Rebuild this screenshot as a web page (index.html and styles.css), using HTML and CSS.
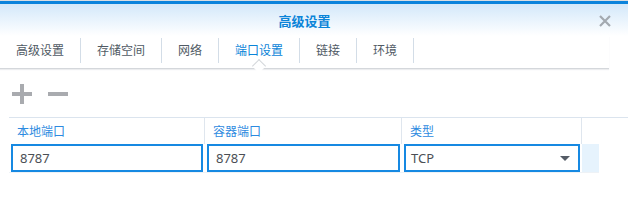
FILE: index.html
```html
<!DOCTYPE html>
<html lang="zh-CN">

<head>
    <meta charset="UTF-8">
    <title>高级设置</title>
    <link rel="stylesheet" href="styles.css">
</head>

<body>
    <div class="dialog">
        <div class="titlebar">
            <span class="title">高级设置</span>
            <span class="close" title="关闭">
                <svg width="12" height="12" viewBox="0 0 12 12">
                    <path d="M1 1 L11 11 M11 1 L1 11" stroke="#a3a9b0" stroke-width="2.2" />
                </svg>
            </span>
        </div>

        <div class="tabs">
            <div class="tab">高级设置</div>
            <div class="tab">存储空间</div>
            <div class="tab">网络</div>
            <div class="tab active">端口设置</div>
            <div class="tab">链接</div>
            <div class="tab">环境</div>
        </div>

        <div class="toolbar">
            <span class="tool-btn" title="新增">
                <svg width="20" height="20" viewBox="0 0 20 20">
                    <rect x="0" y="8" width="20" height="4" fill="#a9abaf" />
                    <rect x="8" y="0" width="4" height="20" fill="#a9abaf" />
                </svg>
            </span>
            <span class="tool-btn" title="删除">
                <svg width="20" height="20" viewBox="0 0 20 20">
                    <rect x="0" y="8" width="20" height="4" fill="#a9abaf" />
                </svg>
            </span>
        </div>

        <div class="grid">
            <div class="head">本地端口</div>
            <div class="head">容器端口</div>
            <div class="head">类型</div>
            <div class="head last"></div>

            <div class="cell"><input class="field" type="text" value="8787"></div>
            <div class="cell"><input class="field" type="text" value="8787"></div>
            <div class="cell">
                <div class="field select">
                    <span>TCP</span>
                    <span class="caret"></span>
                </div>
            </div>
            <div class="cell filler"></div>
        </div>
    </div>
</body>

</html>
```

FILE: styles.css
```css
body {
    margin: 0;
    background: #fff;
    font-family: "Noto Sans", "Noto Sans CJK SC", sans-serif;
    font-size: 12px;
    color: #505a64;
}

.dialog {
    width: 628px;
    height: 221px;
    overflow: hidden;
    border-top: 1px solid #d9dde2;
}

.titlebar {
    position: relative;
    height: 32px;
    border-top: 3px solid #0a83dc;
    background: linear-gradient(to bottom, #d3e8fa, #ffffff);
    display: flex;
    align-items: center;
    justify-content: center;
    padding-right: 19px;
}

.title {
    font-size: 13px;
    font-weight: bold;
    color: #0a84d8;
}

.close {
    position: absolute;
    right: 17px;
    top: 11px;
    width: 12px;
    height: 12px;
    display: flex;
}

.tabs {
    width: 609px;
    height: 30px;
    display: flex;
    align-items: flex-start;
    padding-top: 2px;
    border-bottom: 1px solid #d4d7db;
    box-shadow: 0 1px 1px #ecedef;
}

.tab {
    position: relative;
    height: 25px;
    line-height: 25px;
    padding: 0 16px;
    border-right: 1px solid #d3dde7;
    color: #505a64;
}

.tab.active {
    color: #0a84d8;
}

.tab.active::after {
    content: "";
    position: absolute;
    left: 50%;
    bottom: -8px;
    width: 9px;
    height: 9px;
    margin-left: -5px;
    background: #fff;
    border-top: 1px solid #d4d7db;
    border-left: 1px solid #d4d7db;
    transform: rotate(45deg);
}

.toolbar {
    height: 47px;
    display: flex;
    align-items: center;
    gap: 16px;
    padding-left: 12px;
    padding-top: 1px;
}

.tool-btn {
    display: flex;
    width: 20px;
    height: 20px;
}

.grid {
    margin-left: 9px;
    display: grid;
    grid-template-columns: 196px 197px 180px 17px;
    border-top: 1px solid #dbe4ee;
}

.head {
    height: 26px;
    line-height: 27px;
    padding-left: 8px;
    border-right: 1px solid #dfe6ee;
    color: #2d8ae0;
}

.head.last {
    border-right: none;
}

.cell {
    height: 28px;
    padding: 0 2px;
    border-bottom: 1px solid #eef2f6;
}

.cell.filler {
    padding: 0;
    background: #e6f3fd;
}

.field {
    box-sizing: border-box;
    width: 100%;
    height: 28px;
    margin: 0;
    border: 2px solid #1689e2;
    padding: 0 7px;
    font-family: "Noto Sans", "Noto Sans CJK SC", sans-serif;
    font-size: 13px;
    color: #4b4f55;
    background: #fff;
    outline: none;
}

.select {
    display: flex;
    align-items: center;
    justify-content: space-between;
    padding: 0 8px 0 5px;
}

.caret {
    width: 0;
    height: 0;
    border-left: 5px solid transparent;
    border-right: 5px solid transparent;
    border-top: 5px solid #555c66;
}
```
